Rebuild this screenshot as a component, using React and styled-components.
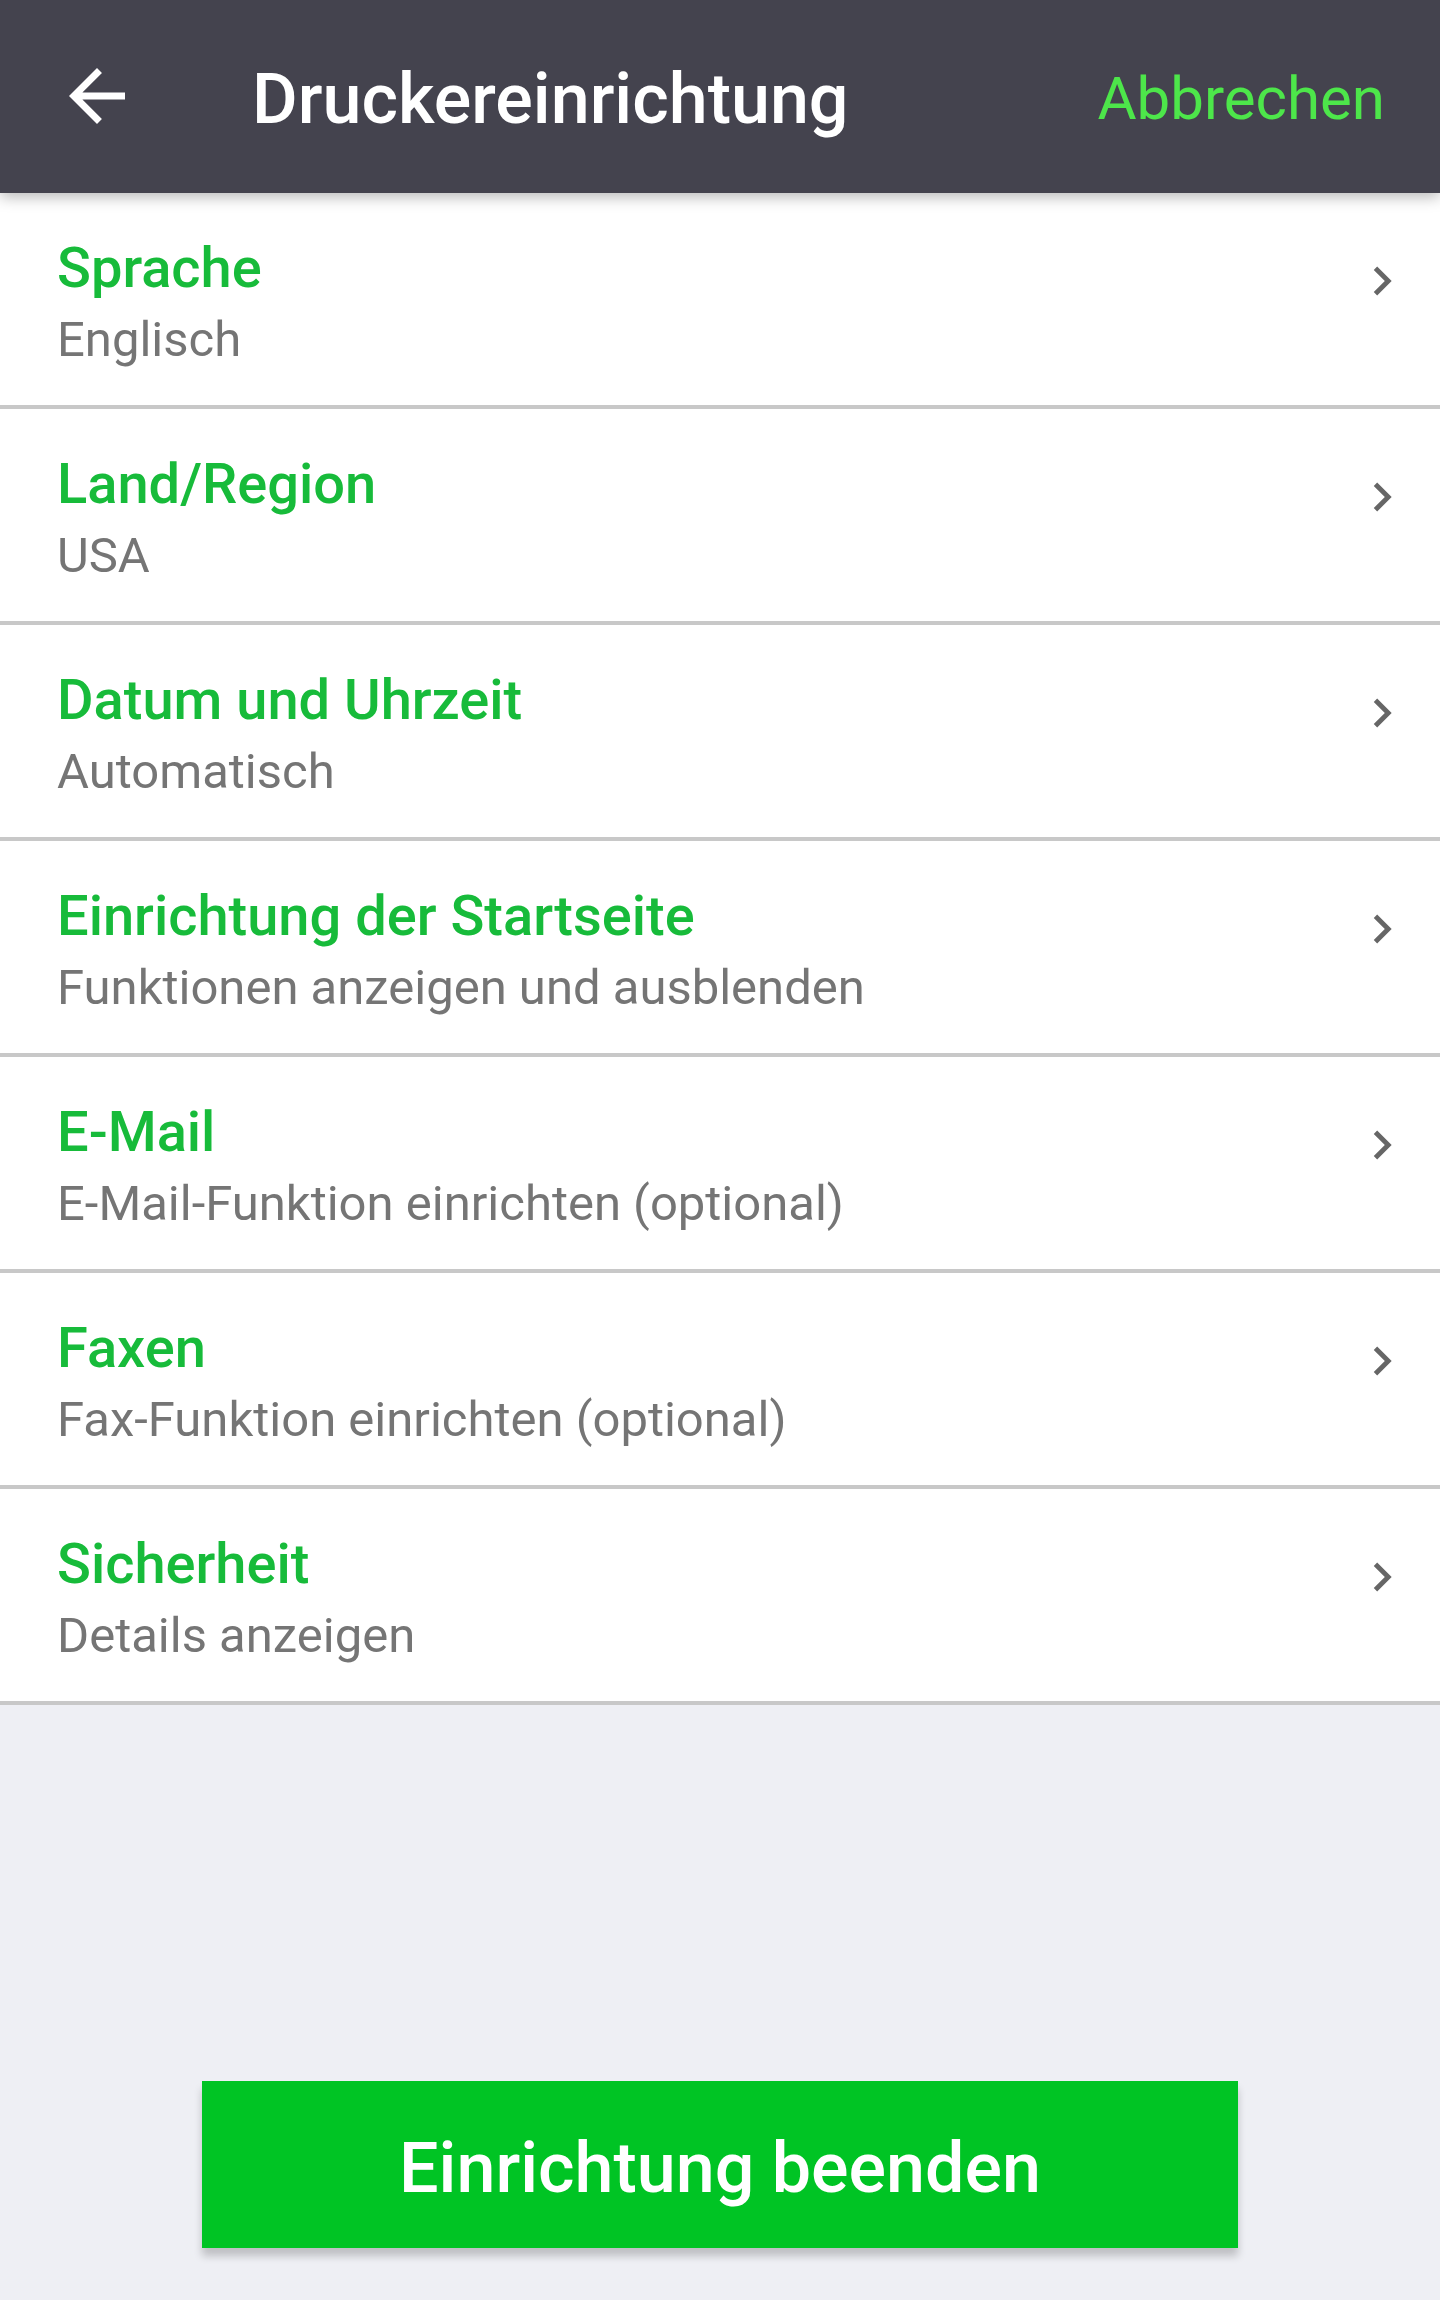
import React from "react";
import styled, { createGlobalStyle } from "styled-components";

const GlobalStyle = createGlobalStyle`
  html, body {
    margin: 0;
    padding: 0;
    background: #eeeff4;
  }
  body {
    font-family: Roboto, "Noto Sans", "Liberation Sans", sans-serif;
    -webkit-font-smoothing: antialiased;
  }
  * { box-sizing: border-box; }
`;

const Screen = styled.div`
  width: 1440px;
  height: 2300px;
  display: flex;
  flex-direction: column;
  background: #eeeff4;
  overflow: hidden;
`;

const Toolbar = styled.header`
  position: relative;
  z-index: 2;
  height: 193px;
  flex: 0 0 193px;
  display: flex;
  align-items: center;
  padding: 4px 55px 0 55px;
  background: #44434e;
  box-shadow: 0 4px 14px rgba(0, 0, 0, 0.28);
`;

const BackButton = styled.button`
  width: 84px;
  height: 84px;
  padding: 0;
  margin: -6px 113px 0 0;
  border: 0;
  background: transparent;
  display: flex;
  align-items: center;
  justify-content: center;
  cursor: pointer;
`;

const Title = styled.h1`
  flex: 1;
  margin: 0;
  font-size: 70px;
  font-weight: 500;
  color: #ffffff;
  line-height: 1;
  letter-spacing: 0;
`;

const CancelButton = styled.button`
  border: 0;
  padding: 0;
  background: transparent;
  font-family: inherit;
  font-size: 60px;
  font-weight: 400;
  color: #4de64a;
  line-height: 1;
  cursor: pointer;
`;

const List = styled.ul`
  list-style: none;
  margin: 0;
  padding: 0;
  background: #ffffff;
`;

const Row = styled.li`
  height: 216px;
  display: flex;
  align-items: flex-start;
  padding: 42px 29px 0 57px;
  border-bottom: 4px solid #c8c8c8;
  background: #ffffff;
  cursor: pointer;
`;

const RowText = styled.div`
  flex: 1;
  display: flex;
  flex-direction: column;
`;

const RowTitle = styled.span`
  font-size: 56px;
  line-height: 66px;
  font-weight: 500;
  color: #17bb3a;
`;

const RowSubtitle = styled.span`
  margin-top: 10px;
  font-size: 49px;
  line-height: 58px;
  font-weight: 400;
  color: #757575;
`;

const Chevron = styled.svg`
  flex: 0 0 58px;
  width: 58px;
  height: 58px;
  margin-top: 17px;
`;

const Spacer = styled.div`
  flex: 1;
`;

const Footer = styled.div`
  display: flex;
  justify-content: center;
  padding: 0 0 52px 0;
`;

const FinishButton = styled.button`
  width: 1036px;
  height: 167px;
  border: 0;
  border-radius: 0;
  background: #00c424;
  color: #ffffff;
  font-family: inherit;
  font-size: 70px;
  font-weight: 500;
  padding: 6px 0 0 0;
  box-shadow: 0 8px 8px rgba(0, 0, 0, 0.2);
  cursor: pointer;
`;

const items = [
  { title: "Sprache", subtitle: "Englisch" },
  { title: "Land/Region", subtitle: "USA" },
  { title: "Datum und Uhrzeit", subtitle: "Automatisch" },
  { title: "Einrichtung der Startseite", subtitle: "Funktionen anzeigen und ausblenden" },
  { title: "E-Mail", subtitle: "E-Mail-Funktion einrichten (optional)" },
  { title: "Faxen", subtitle: "Fax-Funktion einrichten (optional)" },
  { title: "Sicherheit", subtitle: "Details anzeigen" },
];

export default function App() {
  return (
    <>
      <GlobalStyle />
      <Screen>
        <Toolbar>
          <BackButton aria-label="Zurück">
            <svg width="84" height="84" viewBox="0 0 24 24">
              <path
                fill="#ffffff"
                d="M20 11H7.83l5.59-5.59L12 4l-8 8 8 8 1.41-1.41L7.83 13H20v-2z"
              />
            </svg>
          </BackButton>
          <Title>Druckereinrichtung</Title>
          <CancelButton>Abbrechen</CancelButton>
        </Toolbar>
        <List>
          {items.map((it) => (
            <Row key={it.title}>
              <RowText>
                <RowTitle>{it.title}</RowTitle>
                <RowSubtitle>{it.subtitle}</RowSubtitle>
              </RowText>
              <Chevron viewBox="0 0 24 24">
                <path
                  fill="#666666"
                  d="M10 6L8.59 7.41 13.17 12l-4.58 4.59L10 18l6-6z"
                />
              </Chevron>
            </Row>
          ))}
        </List>
        <Spacer />
        <Footer>
          <FinishButton>Einrichtung beenden</FinishButton>
        </Footer>
      </Screen>
    </>
  );
}
